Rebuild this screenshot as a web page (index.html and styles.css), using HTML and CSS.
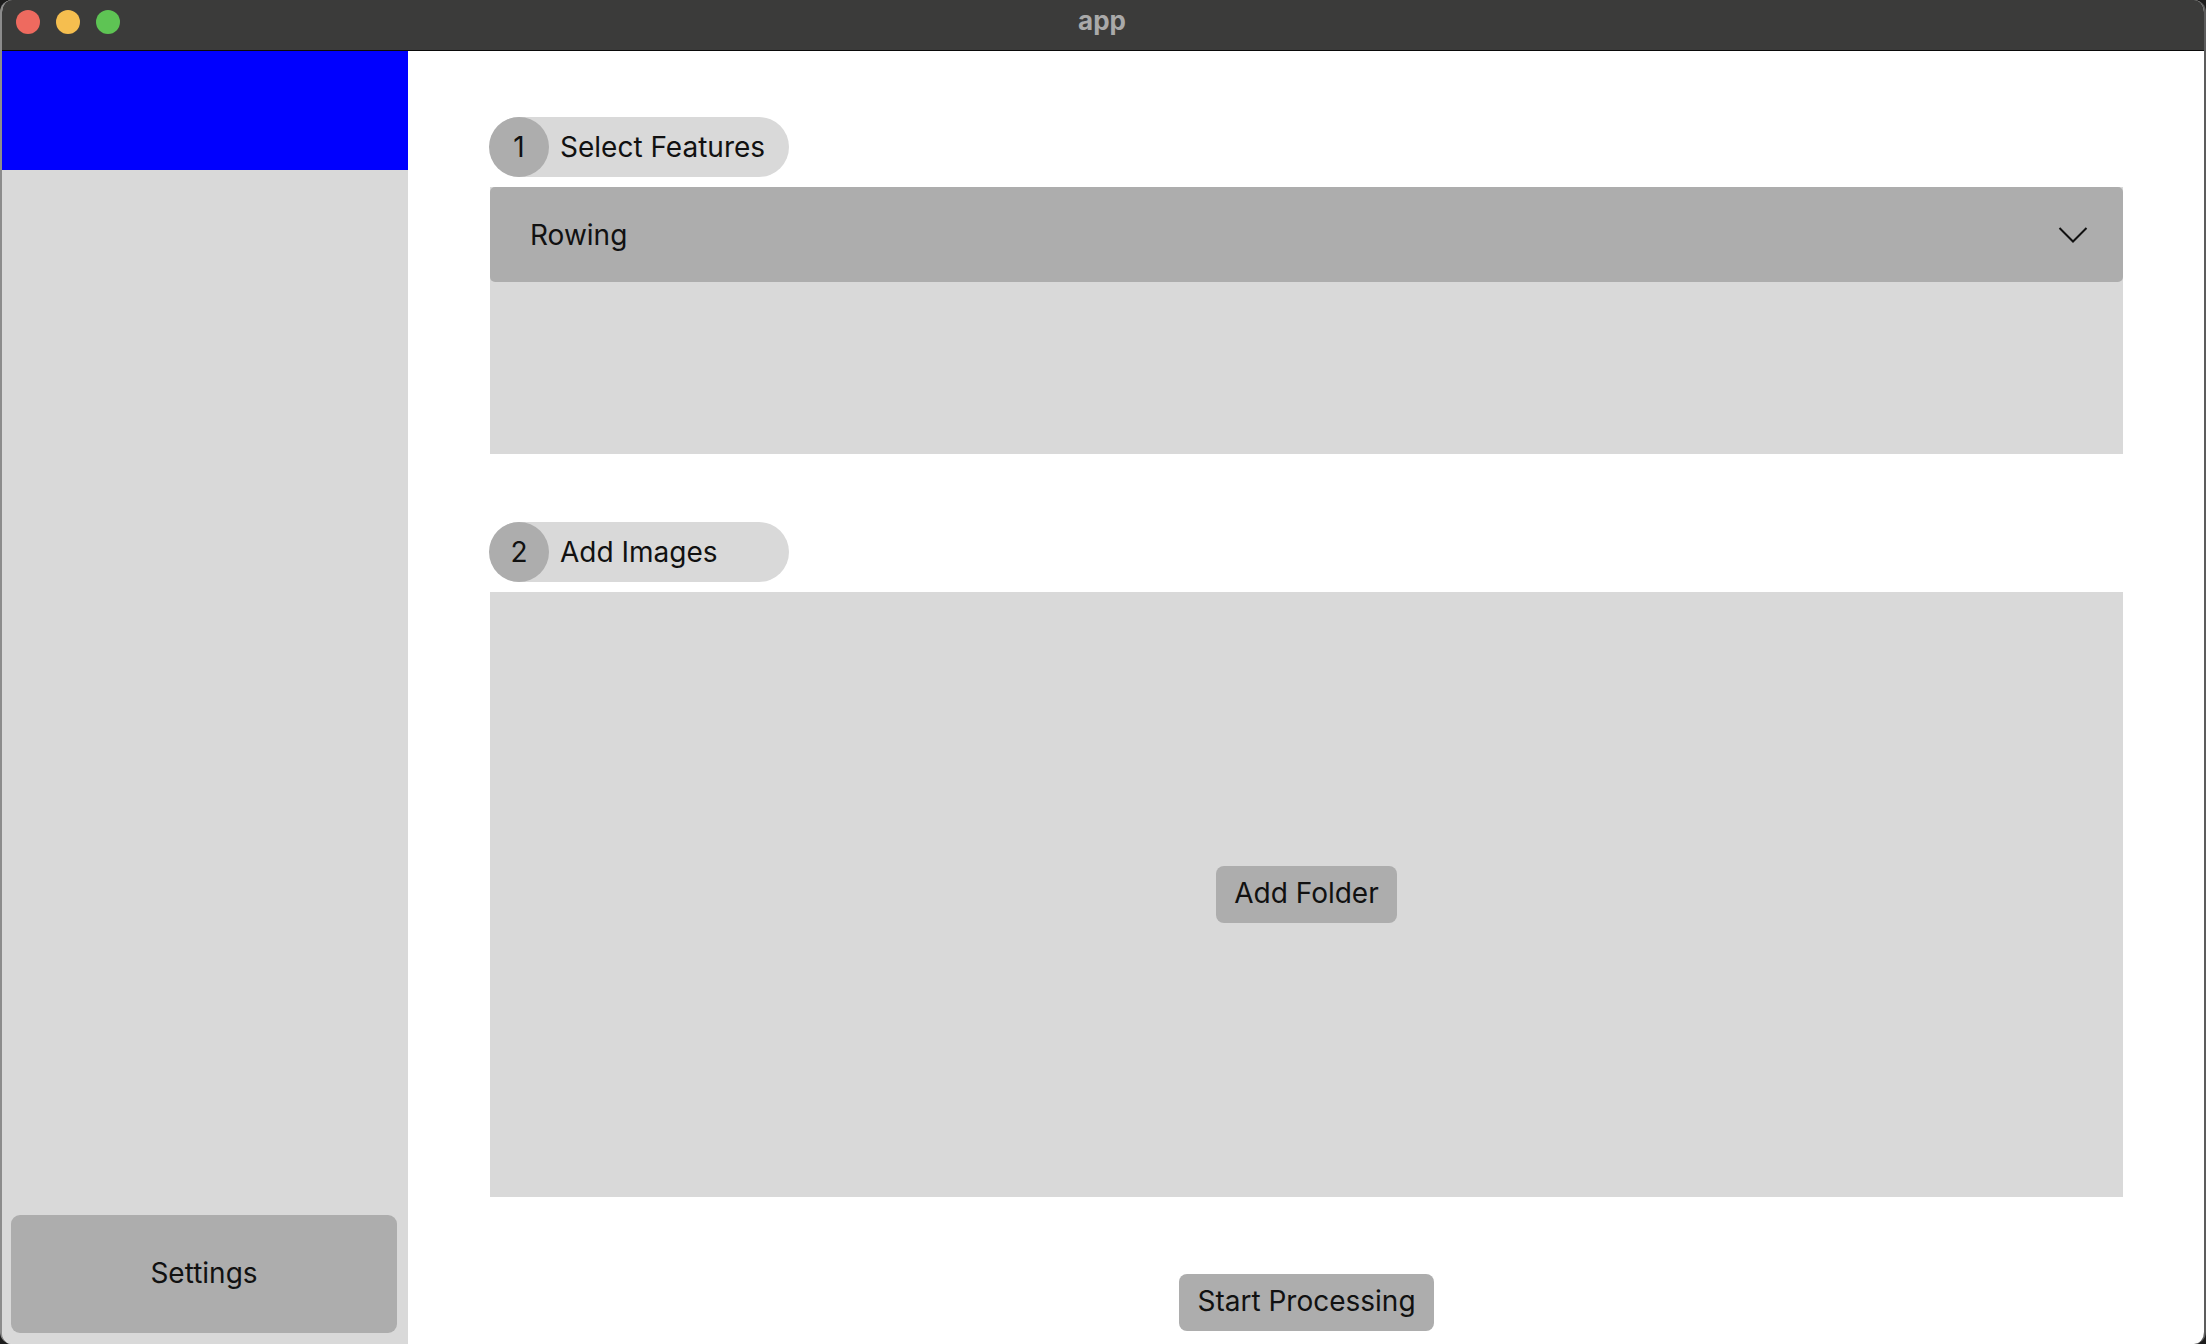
FILE: index.html
```html
<!DOCTYPE html>
<html>
<head>
  <title>app</title>
  <meta charset="utf-8">
  <link rel="stylesheet" href="styles.css">
</head>
<body>
  <div class="window">
    <div class="titlebar">
      <div class="lights">
        <span class="light red"></span>
        <span class="light yellow"></span>
        <span class="light green"></span>
      </div>
      <div class="title">app</div>
    </div>
    <div class="content">
      <div class="sidebar">
        <div class="brand"></div>
        <div class="sidebar-fill"></div>
        <button class="settings">Settings</button>
      </div>
      <div class="main">
        <div class="step">
          <span class="step-num">1</span>
          <span class="step-label">Select Features</span>
        </div>
        <div class="panel features">
          <div class="dropdown">
            <span>Rowing</span>
            <svg width="30" height="18" viewBox="0 0 30 18"><path d="M1.5 2 L15 15.5 L28.5 2" fill="none" stroke="#111" stroke-width="2"/></svg>
          </div>
        </div>
        <div class="step step-two">
          <span class="step-num">2</span>
          <span class="step-label">Add Images</span>
        </div>
        <div class="panel images">
          <button class="btn">Add Folder</button>
        </div>
        <div class="actions">
          <button class="btn">Start Processing</button>
        </div>
      </div>
    </div>
  </div>
</body>
</html>
```

FILE: styles.css
```css
html, body {
  margin: 0;
  padding: 0;
  height: 100%;
  background-color: #1c1c1c;
}
body {
  font-family: Inter, "Noto Sans", sans-serif;
  color: #111;
}
.window {
  height: 1344px;
  display: flex;
  flex-direction: column;
  border-radius: 12px;
  overflow: hidden;
  background-color: #fff;
  box-sizing: border-box;
  border-left: 2px solid #8c8c8c;
  border-right: 2px solid #5c5c5c;
}
.titlebar {
  height: 50px;
  flex: none;
  background-color: #3b3b3a;
  border-bottom: 1px solid #0a0a0a;
  position: relative;
  display: flex;
  align-items: center;
  justify-content: center;
}
.lights {
  position: absolute;
  left: 14px;
  top: 10px;
  display: flex;
  gap: 16px;
}
.light {
  width: 24px;
  height: 24px;
  border-radius: 50%;
}
.red { background-color: #ee6a5f; }
.yellow { background-color: #f5be4f; }
.green { background-color: #5ec454; }
.title {
  color: #a9a9a9;
  font-weight: 700;
  font-size: 26px;
  margin-top: -9px;
  margin-left: -2px;
}
.content {
  flex: 1;
  display: flex;
  min-height: 0;
}
.sidebar {
  width: 406px;
  flex: none;
  background-color: #d9d9d9;
  display: flex;
  flex-direction: column;
  padding-bottom: 11px;
  box-sizing: border-box;
}
.brand {
  height: 119px;
  background-color: #0000ff;
}
.sidebar-fill {
  flex: 1;
}
.settings {
  margin: 0 11px 0 9px;
  height: 118px;
  padding-bottom: 4px;
  border: none;
  border-radius: 9px;
  background-color: #adadad;
  font-family: Inter, "Noto Sans", sans-serif;
  font-size: 28px;
  color: #111;
}
.main {
  flex: 1;
  padding: 66px 81px 0 82px;
  display: flex;
  flex-direction: column;
}
.step {
  align-self: flex-start;
  width: 299px;
  height: 60px;
  border-radius: 30px;
  background-color: #d9d9d9;
  display: flex;
  align-items: center;
  font-size: 28px;
}
.step-num {
  width: 60px;
  height: 60px;
  border-radius: 50%;
  background-color: #adadad;
  display: flex;
  align-items: center;
  justify-content: center;
  margin-left: -1px;
}
.step-label {
  margin-left: 11px;
}
.panel {
  margin-top: 10px;
  background-color: #d9d9d9;
}
.features {
  height: 267px;
}
.dropdown {
  height: 95px;
  background-color: #adadad;
  border-radius: 5px;
  display: flex;
  align-items: center;
  justify-content: space-between;
  padding: 0 35px 0 40px;
  font-size: 28px;
}
.step-two {
  margin-top: 68px;
}
.images {
  height: 605px;
  display: flex;
  align-items: center;
  justify-content: center;
}
.btn {
  height: 57px;
  padding: 0 18px 3px;
  border: none;
  border-radius: 8px;
  background-color: #adadad;
  font-family: Inter, "Noto Sans", sans-serif;
  font-size: 28px;
  color: #111;
}
.actions {
  margin-top: 77px;
  display: flex;
  justify-content: center;
}
```
